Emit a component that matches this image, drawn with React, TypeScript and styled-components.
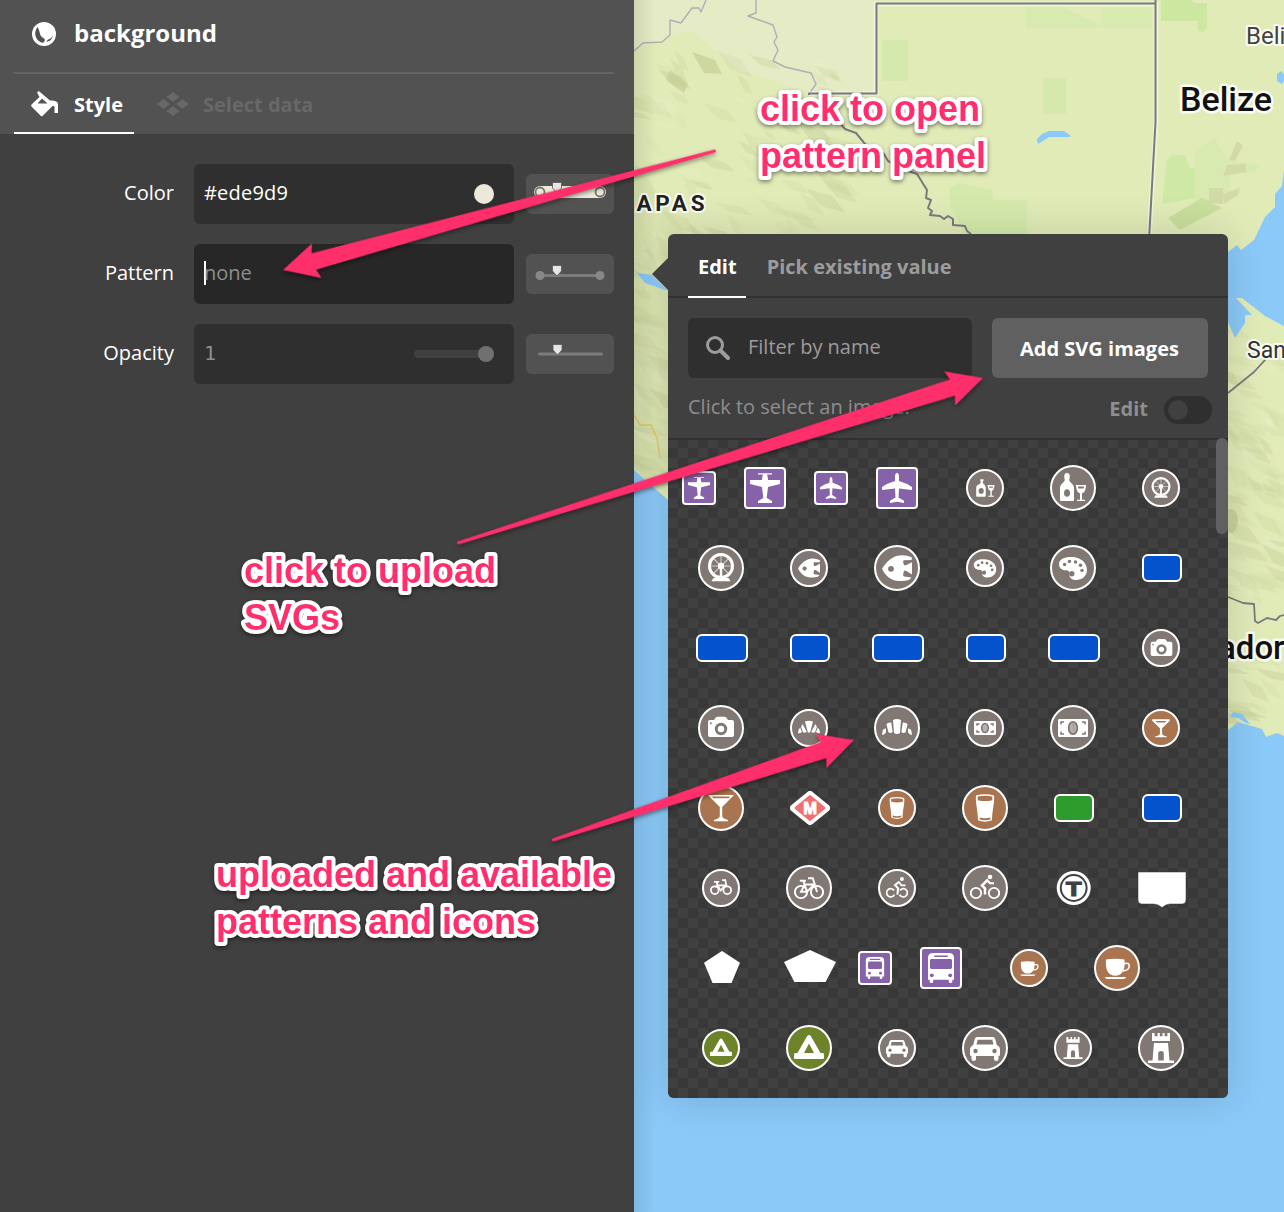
import React from 'react';
import styled, { createGlobalStyle } from 'styled-components';

const PINK = '#ff2f6c';
const GREY = '#827873';
const PURPLE = '#8662a8';
const BROWN = '#a97550';
const OLIVE = '#6c832a';
const BLUE = '#0553cc';
const GREEN = '#2e9c2c';

const GlobalStyle = createGlobalStyle`
  * { box-sizing: border-box; }
  body {
    margin: 0;
    overflow: hidden;
    font-family: "Open Sans", "Noto Sans", sans-serif;
    font-size: 20px;
    color: #fff;
  }
`;

const Page = styled.div`
  position: relative;
  display: flex;
  width: 1284px;
  height: 1212px;
  overflow: hidden;
`;

/* ---------- sidebar ---------- */

const Sidebar = styled.aside`
  flex: 0 0 634px;
  background: #404040;
`;

const SideHeader = styled.header`
  height: 134px;
  padding: 0 20px 0 14px;
  background: #525252;
`;

const TitleRow = styled.div`
  display: flex;
  align-items: center;
  gap: 18px;
  height: 74px;
  padding: 0 0 6px 18px;
  border-bottom: 2px solid #646464;

  svg {
    margin-top: 2px;
  }
`;

const Title = styled.h1`
  margin: 0;
  font-size: 24px;
  line-height: 32px;
  font-weight: 700;
`;

const SideTabs = styled.nav`
  display: flex;
  height: 60px;
`;

const SideTab = styled.div<{ $active?: boolean; $width: number; $gap: number }>`
  display: flex;
  align-items: center;
  gap: ${(p) => p.$gap}px;
  width: ${(p) => p.$width}px;
  padding: 2px 0 0 ${(p) => (p.$active ? 16 : 19)}px;
  font-weight: 700;
  white-space: nowrap;
  color: ${(p) => (p.$active ? '#fff' : '#686868')};
  border-bottom: 2px solid ${(p) => (p.$active ? '#fff' : 'transparent')};
`;

const SideFields = styled.div`
  display: flex;
  flex-direction: column;
  gap: 20px;
  padding: 30px 20px 0 14px;
`;

const FieldRow = styled.div`
  display: grid;
  grid-template-columns: 160px 320px 88px;
  align-items: center;
  height: 60px;
`;

const FieldLabel = styled.label`
  padding: 0 0 3px;
  text-align: right;
`;

const FieldBox = styled.div<{ $focus?: boolean }>`
  display: flex;
  align-items: center;
  justify-content: space-between;
  height: 60px;
  margin-left: 20px;
  width: 320px;
  padding: 0 20px 0 10px;
  border-radius: 6px;
  background: ${(p) => (p.$focus ? '#272727' : '#2f2f2f')};
`;

const FieldValue = styled.span<{ $dim?: boolean; $mono?: boolean }>`
  padding-bottom: 3px;
  font-family: ${(p) => (p.$mono ? '"DejaVu Sans Mono", monospace' : 'inherit')};
  letter-spacing: ${(p) => (p.$dim ? '0' : '0.2px')};
  color: ${(p) => (p.$dim ? '#8e8e8e' : '#fff')};
`;

const Caret = styled.i`
  display: inline-block;
  width: 2px;
  height: 24px;
  margin-right: -2px;
  vertical-align: -5px;
  background: #fff;
`;

const Swatch = styled.div`
  width: 20px;
  height: 20px;
  border-radius: 50%;
  background: #ede9d9;
`;

const SliderTrack = styled.div`
  display: flex;
  align-items: center;
  justify-content: flex-end;
  width: 80px;
  height: 8px;
  border-radius: 4px;
  background: #404040;
`;

const SliderKnob = styled.div`
  width: 16px;
  height: 16px;
  border-radius: 50%;
  background: #707070;
`;

const RampButton = styled.div`
  display: flex;
  width: 88px;
  height: 40px;
  margin-left: 32px;
  border-radius: 6px;
  background: #525252;
`;

/* ---------- map ---------- */

const MapPane = styled.main`
  position: relative;
  flex: 1;
  overflow: hidden;
  background: #8bc9f8;
`;

const MapShade = styled.div`
  position: absolute;
  inset: 0 auto 0 0;
  width: 22px;
  background: linear-gradient(90deg, rgba(0, 0, 0, 0.09), transparent);
`;

/* ---------- popover ---------- */

const Popover = styled.section`
  position: absolute;
  left: 668px;
  top: 234px;
  width: 560px;
  height: 864px;
  display: flex;
  flex-direction: column;
  border-radius: 6px;
  background: #404040;
  box-shadow: 0 0 40px rgba(0, 0, 0, 0.15);

  &::before {
    content: '';
    position: absolute;
    left: -16px;
    top: 24px;
    border: 16px solid transparent;
    border-left: 0;
    border-right-color: #404040;
  }
`;

const PopTabs = styled.nav`
  display: flex;
  gap: 11px;
  height: 64px;
  padding-left: 20px;
  border-bottom: 2px solid #313131;
`;

const PopTab = styled.div<{ $active?: boolean }>`
  height: 64px;
  padding: 0 9px 0 10px;
  line-height: 66px;
  font-weight: 700;
  color: ${(p) => (p.$active ? '#fff' : '#9c9c9c')};
  border-bottom: 2px solid ${(p) => (p.$active ? '#fff' : 'transparent')};
`;

const FilterRow = styled.div`
  display: flex;
  gap: 20px;
  padding: 20px 20px 0;
`;

const SearchBox = styled.div`
  display: flex;
  align-items: center;
  gap: 18px;
  width: 284px;
  height: 60px;
  padding: 0 18px 3px;
  border-radius: 6px;
  background: #2f2f2f;
  color: #9c9c9c;

  svg {
    margin-top: 3px;
  }
`;

const AddButton = styled.div`
  display: flex;
  align-items: center;
  justify-content: center;
  width: 216px;
  height: 60px;
  padding: 1px 1px 0 0;
  border-radius: 6px;
  background: #606060;
  font-weight: 700;
  white-space: nowrap;
`;

const HintRow = styled.div`
  display: flex;
  align-items: center;
  height: 62px;
  padding: 0 16px 0 20px;
  color: #8e8e8e;
  border-bottom: 2px solid #313131;
`;

const Hint = styled.span`
  flex: 1;
  padding-bottom: 4px;
`;

const EditLabel = styled.span`
  margin-right: 16px;
  font-weight: 700;
`;

const Toggle = styled.div`
  display: flex;
  align-items: center;
  width: 48px;
  height: 28px;
  margin-top: 4px;
  padding-left: 4px;
  border-radius: 14px;
  background: #2f2f2f;

  &::after {
    content: '';
    width: 20px;
    height: 20px;
    border-radius: 50%;
    background: #404040;
  }
`;

const ImageGrid = styled.div`
  position: relative;
  flex: 1;
  padding: 8px 0 0 9px;
  border-radius: 0 0 6px 6px;
  background: repeating-conic-gradient(#383838 0 25%, #404040 0 50%) 0 -2px / 20px 20px;
`;

const ScrollThumb = styled.div`
  position: absolute;
  right: 0;
  top: -2px;
  width: 12px;
  height: 96px;
  border-radius: 6px;
  background: #606060;
`;

const ImageRow = styled.div`
  display: flex;
  height: 80px;
`;

const Cell = styled.div<{ $kind: string }>`
  display: flex;
  align-items: center;
  justify-content: center;
  width: ${(p) => (p.$kind === 'square' ? 66 : 88)}px;
  padding-right: ${(p) => (p.$kind === 'square' ? 22 : 0)}px;
  padding-left: ${(p) => (p.$kind === 'shape' ? 2 : 0)}px;
`;

const Badge = styled.div<{ $color: string; $size: number; $radius: string }>`
  flex: none;
  display: flex;
  align-items: center;
  justify-content: center;
  width: ${(p) => p.$size}px;
  height: ${(p) => p.$size}px;
  border: 2px solid #fff;
  border-radius: ${(p) => p.$radius};
  background: ${(p) => p.$color};
  color: ${(p) => p.$color};
`;

const RoadShield = styled.div<{ $color: string; $wide?: boolean }>`
  flex: none;
  width: ${(p) => (p.$wide ? 52 : 40)}px;
  height: 28px;
  border: 2px solid #fff;
  border-radius: 6px;
  background: ${(p) => p.$color};
`;

/* ---------- annotations ---------- */

const AnnotationLayer = styled.svg`
  position: absolute;
  inset: 0;
`;

const AnnotationGroup = styled.g`
  filter: drop-shadow(0 2px 2px rgba(0, 0, 0, 0.45));
`;

const NoteText = styled.text`
  font: 700 36px "Liberation Sans", Arial, sans-serif;
  fill: ${PINK};
  stroke: #fff;
  stroke-width: 8px;
  stroke-linejoin: round;
  paint-order: stroke;
`;

/* White 30x30 pictograms; currentColor is the badge colour, used for cut-outs. */
const glyphs: Record<string, React.ReactNode> = {
  airfield: <path d="M8 .2H22V1.4H17Q18 4 18 7H30V11L18 14L16.7 25L22 28V30H8V28L13.3 25L12 14L0 11V7H12Q12 4 13 1.4H8Z" />,
  airport: <path d="M15 0Q17 0 17 4V8Q24 10 30 14V17L17 15.5L16.5 24.5L22 27.8V30L15 28.8L8 30V27.8L13.5 24.5L13 15.5L0 17V14Q6 10 13 8V4Q13 0 15 0Z" />,
  alcohol: (
    <>
      <path d="M7 1Q7 0 9 0Q11 0 11 1L11.7 2V4.5L11.2 7C12 10 16 11 16 15V27Q16 28 15 28H3Q2 28 2 27V15C2 11 6 10 6.8 7L6.3 4.5V2Z" />
      <ellipse cx="9" cy="20" rx="3" ry="3.8" fill="currentColor" />
      <path d="M17.8 12H28.2L27.2 17Q26.5 20 24 20.5V26.7H27V28H19V26.7H22V20.5Q19.5 20 18.8 17Z" />
      <path d="M19.8 13.5H26.2L25.6 15.5H20.4Z" fill="currentColor" />
    </>
  ),
  alcoholSmall: (
    <>
      <path d="M8.6 3H13V5.5H12V8C13 10.500 16 11 16 14.500V26Q16 27 15 27H4Q3 27 3 26V14.500C3 11 8 10.500 9 8V5.500H8.600Z" />
      <ellipse cx="9.800" cy="19" rx="3.500" ry="4" fill="currentColor" />
      <path d="M18.500 11H28L27.300 15.500Q26.500 18.500 24.200 19V25.500H27V27H19.500V25.500H22.300V19Q20 18.500 19.200 15.500Z" />
      <path d="M20.500 12.800H26L25.600 14.800H20.900Z" fill="currentColor" />
    </>
  ),
  ferris: (
    <>
      <circle cx="15" cy="13" r="11.5" fill="none" stroke="#fff" strokeWidth="3" />
      <path d="M15 2V24M4 13H26M7 5L23 21M23 5L7 21" stroke="#fff" strokeOpacity=".6" strokeWidth="1.2" />
      <circle cx="15" cy="13" r="3.2" />
      <path d="M13.8 13H16.2V25H22.5L24.5 28.2H5.5L7.5 25H13.8Z" />
    </>
  ),
  fish: (
    <>
      <path d="M0 15.8C4 9 10 3.5 17 2.4Q24 1.5 30 4.5L29.5 7L22 7.2L21 8.5L22 12.2H24L30 9.3V21.5L24 17.8H22L21 22L22 23.6L29.5 24.6L27 27Q20 29 13 27.4C7 26 3 22 0 15.8Z" />
      <circle cx="9" cy="15.8" r="2.9" fill="currentColor" />
    </>
  ),
  palette: (
    <>
      <path d="M1 11C1 6 7 3.7 14 4C22 4.3 29 9 29 17C29 23 24 27 18 27C13.5 27 11 24.5 11.4 21C11.7 18.5 10.5 17.3 8 17.3C4 17.3 1 15 1 11Z" />
      <g fill="currentColor">
        <circle cx="6.6" cy="11.5" r="1.7" />
        <circle cx="11.4" cy="8.4" r="1.7" />
        <circle cx="17.5" cy="9" r="1.7" />
        <circle cx="22.5" cy="12.2" r="1.7" />
        <circle cx="24" cy="17.4" r="1.7" />
        <circle cx="13.8" cy="20.8" r="2.7" />
      </g>
    </>
  ),
  camera: (
    <>
      <path d="M4 7H8L9.8 4.5Q10.5 3.7 12 3.7H18Q19.5 3.7 20.2 4.5L22 7H26Q28 7 28 9V22Q28 24 26 24H4Q2 24 2 22V9Q2 7 4 7Z" />
      <circle cx="15" cy="16" r="4.7" fill="none" stroke="currentColor" strokeWidth="3" />
      <circle cx="4.8" cy="10.3" r="1" fill="currentColor" />
    </>
  ),
  croissant: (
    <path d="M11 7Q15 5 19 7L18 20Q15 22 12 20ZM4.4 11Q6 9.3 9.2 9.5L10.6 19Q9 20.5 6.5 19.5ZM25.6 11Q24 9.3 20.8 9.5L19.4 19Q21 20.5 23.5 19.5ZM0 22L.8 17Q2 15.3 4 15.4V19.5Q2.5 21.5 0 22ZM30 22L29.2 17Q28 15.3 26 15.4V19.5Q27.5 21.5 30 22Z" />
  ),
  croissantSmall: (
    <path d="M9.500 6Q15 4.500 20.500 6L16.700 20.500Q15 22.500 13.300 20.500ZM6.300 9.500L12 20.500Q9.500 22 6.800 20.800L4.200 13.500ZM23.700 9.500L18 20.500Q20.500 22 23.200 20.800L25.800 13.500ZM0 22Q.2 17 2.800 14.200L5.500 20.500Q3 22.500 0 22ZM30 22Q29.800 17 27.200 14.200L24.500 20.500Q27 22.500 30 22Z" />
  ),
  money: (
    <>
      <rect y="6" width="30" height="18" rx="1.2" />
      <path d="M3 11.5V9H6M24 9H27V11.5M3 18.5V21H6M24 21H27V18.5" fill="none" stroke="currentColor" strokeWidth="1.5" />
      <ellipse cx="15" cy="15" rx="4.3" ry="6.2" fill="#b7b1ad" stroke="currentColor" strokeWidth="1.8" />
      <path d="M14 11.5H15.5V18.5" fill="none" stroke="currentColor" strokeWidth=".8" strokeOpacity=".5" />
    </>
  ),
  moneySmall: (
    <>
      <rect y="5.500" width="30" height="19" rx="1.500" />
      <path d="M4 12V9.500H7.500M22.500 9.500H26V12M4 18V20.500H7.500M22.500 20.500H26V18" fill="none" stroke="currentColor" strokeWidth="2" />
      <ellipse cx="15" cy="15" rx="4.500" ry="6.200" fill="#b7b1ad" stroke="currentColor" strokeWidth="2.200" />
    </>
  ),
  cocktail: (
    <>
      <path d="M2 2H28L16.2 14V23.5Q17 25.5 22 27V28.2H8V27Q13 25.5 13.8 23.5V14Z" />
      <path d="M6 3.6H24L22.6 5.3H7.4Z" fill="currentColor" />
    </>
  ),
  cocktailSmall: (
    <>
      <path d="M3 3H27V5L16.500 15.500V23.500Q17.500 25.500 23 26.500V27.700H7V26.500Q12.500 25.500 13.500 23.500V15.500L3 5Z" />
      <path d="M7.500 5.300H22.500L20.500 7.500H9.500Z" fill="currentColor" />
    </>
  ),
  beer: (
    <>
      <path d="M6 2.5Q15 -.2 24 2.5C24.8 10 22.2 16 22 27.3Q15 30 8 27.3C7.8 16 5.2 10 6 2.5Z" />
      <path d="M7.7 3.6Q15 1.8 22.3 3.6V7.2Q15 9 7.7 7.2ZM9.6 24.5Q15 26 20.4 24.5V26.6Q15 28 9.6 26.6Z" fill="currentColor" />
    </>
  ),
  bicycle: (
    <g fill="none" stroke="#fff" strokeWidth="1.9">
      <circle cx="7" cy="19" r="6.1" />
      <circle cx="23" cy="19" r="6.1" />
      <path d="M14 5.2H18.8L23 19M5.8 7.8H12M9.3 8L13 18.8H7L10.8 11.5H20L13 18.8" />
    </g>
  ),
  bicycleSmall: (
    <g fill="none" stroke="#fff" strokeWidth="2.400">
      <circle cx="6.500" cy="18" r="5.300" />
      <circle cx="23.500" cy="18" r="5.300" />
      <path d="M16.500 4.200H20.800L22.500 13M5.500 6.800H12.500M9 7L10.500 11.500H21.500M20.500 11.500L14.500 18.500L10 11L7.500 14" />
    </g>
  ),
  cyclist: (
    <>
      <circle cx="20" cy="4" r="2.3" />
      <g fill="none" stroke="#fff" strokeWidth="1.8">
        <circle cx="6" cy="20" r="5.2" />
        <circle cx="24" cy="20" r="5.2" />
        <path d="M17.5 7L12 12.5L15 15.5V21.5" strokeWidth="2.5" />
        <path d="M16.8 6.5L20 10.3H24" strokeWidth="2" />
      </g>
    </>
  ),
  cyclistSmall: (
    <>
      <circle cx="21.800" cy="2.600" r="2.700" />
      <g fill="none" stroke="#fff" strokeWidth="2.300">
        <path d="M11 18.300A5.600 5.600 0 1 0 11.500 24M19 18.300A5.600 5.600 0 1 1 18.500 24" />
        <path d="M18 6.500L12.300 11L16.500 15.500L15.500 24" strokeWidth="2.800" />
        <path d="M17.500 6.500L21 11.500H26.500" />
      </g>
    </>
  ),
  bus: (
    <>
      <path d="M7 0H23Q28 0 28 5V26.8H26.3V29Q26.3 30 24.5 30Q22.8 30 22.8 29V26.8H7.2V29Q7.2 30 5.5 30Q3.7 30 3.7 29V26.8H2V5Q2 0 7 0Z" />
      <g fill="currentColor">
        <rect x="4" y="6" width="22" height="10" rx="1.4" />
        <rect x="8" y="2.5" width="14" height="1.4" rx=".7" />
        <circle cx="5.8" cy="22.3" r="1.9" />
        <circle cx="24.2" cy="22.3" r="1.9" />
      </g>
    </>
  ),
  busSmall: (
    <>
      <path d="M7.500 0H22.500Q27.500 0 27.500 5V26.500H25V28.500Q25 30 23.200 30Q21.500 30 21.500 28.500V26.500H8.500V28.500Q8.500 30 6.800 30Q5 30 5 28.500V26.500H2.500V5Q2.500 0 7.500 0Z" />
      <g fill="currentColor">
        <rect x="5.500" y="6" width="19" height="10.500" rx="2" />
        <rect x="8" y="2.400" width="14" height="1.600" rx=".8" />
        <circle cx="7.500" cy="22" r="2" />
        <circle cx="22.500" cy="22" r="2" />
      </g>
    </>
  ),
  cafe: (
    <>
      <path d="M4 6.5Q13 5 22.5 6.5C23 14 22 19 17.5 21.8Q13 23.5 9 21.8C4.5 19 3.5 14 4 6.5Z" />
      <path d="M22 10.8Q27.3 9 27.3 13Q27 17.5 21 17.8" fill="none" stroke="#fff" strokeWidth="1.7" />
      <path d="M3 24H24Q24 26 20 26H7Q3 26 3 24Z" />
    </>
  ),
  tent: <path fillRule="evenodd" d="M13.2 3Q15 .8 16.8 3L26.5 20H29Q30 20 30 21.5V25Q30 26 29 26H1Q0 26 0 25V21.5Q0 20 1.5 20H3.5ZM15 10.5L10 20H20Z" />,
  car: (
    <>
      <path d="M7 4H23Q24.5 4 25.2 6L26.8 12Q30 13.5 30 16V22Q30 23 28.5 23V26Q28.5 28 26.2 28Q24 28 24 26V23H6V26Q6 28 3.8 28Q1.5 28 1.5 26V23Q0 23 0 22V16Q0 13.5 3.2 12L4.8 6Q5.5 4 7 4Z" />
      <g fill="currentColor">
        <path d="M7.7 6.8H22.3L23.5 11.5H6.5Z" />
        <circle cx="5.5" cy="18" r="2.2" />
        <circle cx="24.5" cy="18" r="2.2" />
      </g>
    </>
  ),
  castle: (
    <>
      <path d="M6 0H8.6V3.2H11.6V0H13.8V3.2H16.5V0H18.6V3.2H21.4V0H24V8H6ZM8 10H22L23.5 27.5H28V30H2V27.5H6.5Z" />
      <path d="M12.2 27.5V20.5Q12.2 18 15 18Q17.8 18 17.8 20.5V27.5Z" fill="currentColor" />
    </>
  ),
};

/* Small glyphs are 22px unless their drawing leaves a margin inside the box. */
const smallSizes: Record<string, number> = { palette: 24, camera: 25, beer: 24 };

type Item =
  | { kind: 'round' | 'square'; glyph: string; color: string; large?: boolean }
  | { kind: 'road'; color: string; wide?: boolean }
  | { kind: 'shape'; shape: string };

const round = (glyph: string, color = GREY, large = false): Item => ({ kind: 'round', glyph, color, large });
const square = (glyph: string, large = false): Item => ({ kind: 'square', glyph, color: PURPLE, large });
const road = (color: string, wide = false): Item => ({ kind: 'road', color, wide });
const shape = (name: string): Item => ({ kind: 'shape', shape: name });

const rows: Item[][] = [
  [square('airfield'), square('airfield', true), square('airport'), square('airport', true), round('alcoholSmall'), round('alcohol', GREY, true), round('ferris')],
  [round('ferris', GREY, true), round('fish'), round('fish', GREY, true), round('palette'), round('palette', GREY, true), road(BLUE)],
  [road(BLUE, true), road(BLUE), road(BLUE, true), road(BLUE), road(BLUE, true), round('camera')],
  [round('camera', GREY, true), round('croissantSmall'), round('croissant', GREY, true), round('moneySmall'), round('money', GREY, true), round('cocktailSmall', BROWN)],
  [round('cocktail', BROWN, true), shape('metro'), round('beer', BROWN), round('beer', BROWN, true), road(GREEN), road(BLUE)],
  [round('bicycleSmall'), round('bicycle', GREY, true), round('cyclistSmall'), round('cyclist', GREY, true), shape('transit'), shape('shield')],
  [shape('pentagon'), shape('pentagonWide'), square('busSmall'), square('bus', true), round('cafe', BROWN), round('cafe', BROWN, true)],
  [round('tent', OLIVE), round('tent', OLIVE, true), round('car'), round('car', GREY, true), round('castle'), round('castle', GREY, true)],
];

const shapes: Record<string, React.ReactNode> = {
  metro: (
    <svg width="40" height="34" viewBox="0 0 40 34">
      <path d="M20 4L36 17L20 30L4 17Z" fill="#fff" stroke="#fff" strokeWidth="8" strokeLinejoin="round" />
      <path d="M20 5L34.5 17L20 29L5.500 17Z" fill="#ef6f72" stroke="#ef6f72" strokeWidth="2" strokeLinejoin="round" />
      <text x="20" y="23" textAnchor="middle" fill="#fff" stroke="#fff" strokeWidth="1" fontFamily="Liberation Sans, Arial, sans-serif" fontWeight="700" fontSize="16.500">M</text>
    </svg>
  ),
  transit: (
    <svg width="36" height="36" viewBox="0 0 36 36">
      <circle cx="17.700" cy="18" r="17" fill="#fff" />
      <circle cx="17.700" cy="18" r="12.900" fill="#fff" stroke="#404040" strokeWidth="2" />
      <text x="17.700" y="25.500" textAnchor="middle" fill="#404040" stroke="#404040" strokeWidth="1.200" fontFamily="Liberation Sans, Arial, sans-serif" fontWeight="700" fontSize="19.500" textLength="15.500" lengthAdjust="spacingAndGlyphs">T</text>
    </svg>
  ),
  shield: (
    <svg width="50" height="40" viewBox="0 0 50 40">
      <path d="M1 4H49V32Q49 36 45 36H33Q29 36 25 39.500Q21 36 17 36H5Q1 36 1 32Z" fill="#fff" stroke="#333" strokeWidth=".5" />
    </svg>
  ),
  pentagon: (
    <svg width="38" height="34" viewBox="0 0 38 34">
      <path d="M19 0L37 11.700L28.500 32H9.500L1 11.700Z" fill="#fff" />
    </svg>
  ),
  pentagonWide: (
    <svg width="52" height="36" viewBox="0 0 52 36">
      <path d="M26 0L52 12L41.600 32H10.400L0 12Z" fill="#fff" />
    </svg>
  ),
};

function ImageItem({ item }: { item: Item }) {
  if (item.kind === 'road') {
    return (
      <Cell $kind="shape">
        <RoadShield $color={item.color} $wide={item.wide} />
      </Cell>
    );
  }
  if (item.kind === 'shape') return <Cell $kind="shape">{shapes[item.shape]}</Cell>;
  const isRound = item.kind === 'round';
  const size = (item.large ? 42 : 34) + (isRound ? 4 : 0);
  const glyphSize = item.large ? 30 : smallSizes[item.glyph] ?? 22;
  return (
    <Cell $kind={item.kind}>
      <Badge $color={item.color} $size={size} $radius={isRound ? '50%' : '4px'}>
        <svg width={glyphSize} height={glyphSize} viewBox="0 0 30 30" fill="#fff">
          {glyphs[item.glyph]}
        </svg>
      </Badge>
    </Cell>
  );
}

function RampIcon({ kind }: { kind: 'color' | 'stops' | 'line' }) {
  const pointerY = kind === 'color' ? 8 : kind === 'stops' ? 11 : 10;
  return (
    <svg width="88" height="40" viewBox="0 0 88 40">
      {kind === 'color' && (
        <>
          <rect x="8" y="12" width="72" height="12" rx="6" fill="#ede9d9" />
          <circle cx="14" cy="18" r="4.500" fill="#ede9d9" stroke="#77746b" strokeWidth="1.800" />
          <circle cx="74" cy="18" r="4.500" fill="#ede9d9" stroke="#77746b" strokeWidth="1.800" />
        </>
      )}
      {kind === 'stops' && (
        <g fill="#888">
          <rect x="14" y="20" width="60" height="3" fill="#7c7c7c" />
          <circle cx="14" cy="21.500" r="4.500" />
          <circle cx="74" cy="21.500" r="4.500" />
        </g>
      )}
      {kind === 'line' && <rect x="12" y="18.500" width="65" height="3" rx="1.500" fill="#7c7c7c" />}
      <path
        transform={`translate(${kind === 'line' ? 26.5 : 26} ${pointerY})`}
        d="M.5 .5H9.500V6L5 11L.5 6Z"
        fill="#e6e6e6"
        stroke="#555"
        strokeWidth=".8"
      />
    </svg>
  );
}

/* Facets of the hill shading: a fixed scatter of small skewed quads. */
function facets(seed: number, count: number, x: number, y: number, w: number, h: number) {
  let s = seed;
  const rnd = () => {
    s = (s * 16807) % 2147483647;
    return s / 2147483647;
  };
  return Array.from({ length: count }, (_, i) => {
    const cx = x + rnd() * w;
    const cy = y + rnd() * h;
    const a = 6 + rnd() * 16;
    const b = 4 + rnd() * 10;
    const tone = ['#c9d69c', '#d2dca6', '#e9efc5', '#c4cc96'][Math.floor(rnd() * 4)];
    return (
      <path key={`${seed}-${i}`} fill={tone} fillOpacity={0.15 + rnd() * 0.25} d={`M${cx - a} ${cy - b}L${cx + a * 0.4} ${cy - b * 0.3}L${cx + a} ${cy + b}L${cx - a * 0.2} ${cy + b * 0.5}Z`} />
    );
  });
}

function MapDrawing() {
  return (
    <svg width="650" height="1212" viewBox="634 0 650 1212" fontFamily="Roboto, sans-serif" strokeLinejoin="round">
      <defs>
        <clipPath id="land">
          <path d="M634 0H1284V170L1282 186L1275 194V207L1265 217L1254 240L1241 250L1237 245L1228 252V322L1235 338L1245 323V315H1252L1236 298H1242L1265 316L1284 326V736L1277 733L1266 737L1262 729L1238 722L1228 730L668 500L634 470Z" />
        </clipPath>
      </defs>
      <g clipPath="url(#land)">
        <path d="M634 0H1284V760H634Z" fill="#e1ebb8" />
        <path d="M634 0H876V93H810L740 70L690 30L634 50Z" fill="#e6ebc8" fillOpacity=".8" />
        <path d="M634 470V160L690 240L670 480Z" fill="#d4dea8" fillOpacity=".5" />
        <g fill="#d5e9ac">
          <rect x="882" y="40" width="26" height="41" />
          <path d="M1026 7H1062L1101 25V28H1026ZM1102 8H1152V28H1102Z" fillOpacity=".7" />
          <rect x="1043" y="78" width="23" height="36" />
          <path d="M1161 0H1190L1195 3H1207V28Q1203 35 1198 30V21H1161Z" fill="#cbe7a0" />
          <path d="M950 188L958 183L993 190V200L1027 200V234H965L950 206ZM1000 205L1027 200V218H1005Z" />
          <path d="M1167 160L1172 155L1185 155L1190 168H1195V198L1162 204Z" fill="#cde9a5" />
          <path d="M1195 150L1215 138L1222 152L1230 160L1260 165L1255 172L1230 175V200L1195 208Z" fillOpacity=".7" />
          <path d="M1168 218L1202 198L1222 208L1180 230Z" fill="#c9df9d" />
        </g>
        <g fill="#d2dba7">
          <path d="M1237 141L1243 146L1235 161L1229 160ZM1227 165L1246 164V172L1223 176ZM1209 188H1223V204L1209 203ZM1223 194L1240 188L1238 195L1224 204Z" />
          <path d="M692 52L715 60L722 74L704 73ZM670 70L688 84L684 93L666 80Z" fill="#cdd79f" />
        </g>
        {facets(17, 70, 636, 60, 210, 180)}
        {facets(31, 46, 634, 240, 34, 240)}
        {facets(53, 75, 1228, 330, 56, 270)}
        {facets(91, 18, 1228, 650, 56, 70)}
        <ellipse cx="1231" cy="521" rx="7" ry="12" fill="#bcc58e" fillOpacity=".6" />
      </g>
      <g fill="#8bc9f8">
        <path d="M1038 144L1037 139L1042 134L1049 131H1064L1071 136L1069 137H1049Z" />
        <path d="M1277 74L1281 71L1284 74V81L1282 84L1277 81Z" />
        <path d="M634 269L638 273L652 275L668 291L645 283Z" />
        <path d="M1230 717L1233 712L1242 714L1250 724L1246 723L1238 718Z" />
      </g>
      <g fill="none">
        <path d="M706 0L701 12L699 8H692L681 23L670 20V35L662 42L643 43L634 51M756 0V13L748 16L759 20L773 25L777 37L774 42L778 50L773 61L785 67L811 73L816 84L809 94" stroke="#b0aeb4" strokeWidth="1.400" />
        <g stroke="#fff" strokeOpacity=".4" strokeWidth="5">
          <path d="M809 93.500H876V4H1156V122L1149 240" />
        </g>
        <path d="M809 95V93.500H876.500V3.500H1155.500V0V122L1149 240M839 122L845 129L856 133L865 144L884 154L888 161L908 171L917 174L927 190L926 198L931 200L928 208L932 211L930 215L940 216L944 219L948 216L953 219V225L965 226L967 231L971 234" stroke="#7b7980" strokeWidth="2" />
        <path d="M1228 393L1254 372L1276 348M1228 597L1243 603L1254 604L1255 621L1258 623L1267 618L1276 620L1280 616L1284 615" stroke="#7b7980" strokeWidth="1.800" />
        <path d="M634 415L640 425L651 425L657 438L660 458" stroke="#e9c45f" strokeWidth="1.300" />
      </g>
      <g stroke="#fff" strokeOpacity=".85" paintOrder="stroke">
        <text x="1180" y="111" fontSize="34" fontWeight="500" fill="#111" strokeWidth="5" textLength="92">Belize</text>
        <text x="1246" y="44" fontSize="24" fill="#444" strokeWidth="4">Beli</text>
        <text x="1247" y="358" fontSize="23" fill="#333" strokeWidth="4">San</text>
        <text x="1218" y="659" fontSize="33" fontWeight="500" fill="#111" strokeWidth="5">ador</text>
        <text x="636.500" y="211" fontSize="22.500" fontWeight="700" fill="#222" strokeWidth="4" textLength="68">APAS</text>
      </g>
    </svg>
  );
}

/* Tapered arrow: a thin tail that widens toward the head. */
function Arrow({ from, to }: { from: [number, number]; to: [number, number] }) {
  const length = Math.hypot(to[0] - from[0], to[1] - from[1]);
  const angle = (Math.atan2(to[1] - from[1], to[0] - from[0]) * 180) / Math.PI;
  return (
    <path
      transform={`translate(${to[0]} ${to[1]}) rotate(${angle})`}
      d={`M0 0L-35 -18L-32 -8.500L${-length} -1.500Q${-length - 2} 0 ${-length} 1.500L-32 8.500L-35 18Z`}
      fill={PINK}
    />
  );
}

function Note({ x, y, lines }: { x: number; y: number; lines: string[] }) {
  return (
    <AnnotationGroup>
      <NoteText>
        {lines.map((line, i) => (
          <tspan key={line} x={x} y={y + i * 47}>{line}</tspan>
        ))}
      </NoteText>
    </AnnotationGroup>
  );
}

export default function App() {
  return (
    <Page>
      <GlobalStyle />
      <Sidebar>
        <SideHeader>
          <TitleRow>
            <svg width="24" height="24" viewBox="0 0 24 24">
              <circle cx="12" cy="12" r="12" fill="#fff" />
              <path d="M5.800 5Q3 8 3.200 12.500Q4 18.500 9.800 20.700L12 20.300Q13.500 17.500 12 16.500Q8 14.500 7.600 10Z" fill="#525252" />
              <path d="M20.700 13Q20.800 16.500 18.300 18.500L14.500 20Q15 17.500 17.300 17Q19.800 16.500 20.700 13Z" fill="#525252" />
            </svg>
            <Title>background</Title>
          </TitleRow>
          <SideTabs>
            <SideTab $active $width={120} $gap={14}>
              <svg width="30" height="28" viewBox="0 0 30 28">
                <path fillRule="evenodd" d="M7.500 3.500Q7 .8 9 1.300L20 10.500Q27.500 10 28 14V23H24.500V17Q24.500 15.500 22.500 16L12.500 26Q12 26.500 11 26L1.500 16.500Q.8 15.500 1.500 14.500L9.500 7ZM12 8.500L7.500 13.500H17.500Z" fill="#fff" />
              </svg>
              Style
            </SideTab>
            <SideTab $width={200} $gap={10}>
              <svg width="40" height="28" viewBox="0 0 40 28">
                <path d="M20 2L26.500 7L20 12L13.500 7ZM10.500 9L17 14L10.500 19L4 14ZM29.500 9L36 14L29.500 19L23 14ZM20 16L26.500 21L20 26L13.500 21Z" fill="#686868" />
              </svg>
              Select data
            </SideTab>
          </SideTabs>
        </SideHeader>
        <SideFields>
          <FieldRow>
            <FieldLabel>Color</FieldLabel>
            <FieldBox>
              <FieldValue>#ede9d9</FieldValue>
              <Swatch />
            </FieldBox>
            <RampButton><RampIcon kind="color" /></RampButton>
          </FieldRow>
          <FieldRow>
            <FieldLabel>Pattern</FieldLabel>
            <FieldBox $focus>
              <FieldValue $dim><Caret />none</FieldValue>
            </FieldBox>
            <RampButton><RampIcon kind="stops" /></RampButton>
          </FieldRow>
          <FieldRow>
            <FieldLabel>Opacity</FieldLabel>
            <FieldBox>
              <FieldValue $dim $mono>1</FieldValue>
              <SliderTrack><SliderKnob /></SliderTrack>
            </FieldBox>
            <RampButton><RampIcon kind="line" /></RampButton>
          </FieldRow>
        </SideFields>
      </Sidebar>

      <MapPane>
        <MapDrawing />
        <MapShade />
      </MapPane>

      <Popover>
        <PopTabs>
          <PopTab $active>Edit</PopTab>
          <PopTab>Pick existing value</PopTab>
        </PopTabs>
        <FilterRow>
          <SearchBox>
            <svg width="24" height="24" viewBox="0 0 24 24" fill="none" stroke="#9c9c9c" strokeLinecap="round">
              <circle cx="9" cy="9" r="7.500" strokeWidth="3" />
              <path d="M14.500 14.500L22 22" strokeWidth="4" />
            </svg>
            Filter by name
          </SearchBox>
          <AddButton>Add SVG images</AddButton>
        </FilterRow>
        <HintRow>
          <Hint>Click to select an image.</Hint>
          <EditLabel>Edit</EditLabel>
          <Toggle />
        </HintRow>
        <ImageGrid>
          {rows.map((row, r) => (
            <ImageRow key={r}>
              {row.map((item, i) => <ImageItem key={i} item={item} />)}
            </ImageRow>
          ))}
          <ScrollThumb />
        </ImageGrid>
      </Popover>

      <AnnotationLayer width="1284" height="1212" viewBox="0 0 1284 1212">
        <AnnotationGroup>
          <Arrow from={[715, 151]} to={[283, 270]} />
          <Arrow from={[458, 543]} to={[983, 378]} />
          <Arrow from={[553, 840]} to={[854, 740]} />
        </AnnotationGroup>
        <Note x={760} y={121} lines={['click to open', 'pattern panel']} />
        <Note x={244} y={583} lines={['click to upload', 'SVGs']} />
        <Note x={216} y={887} lines={['uploaded and available', 'patterns and icons']} />
      </AnnotationLayer>
    </Page>
  );
}
